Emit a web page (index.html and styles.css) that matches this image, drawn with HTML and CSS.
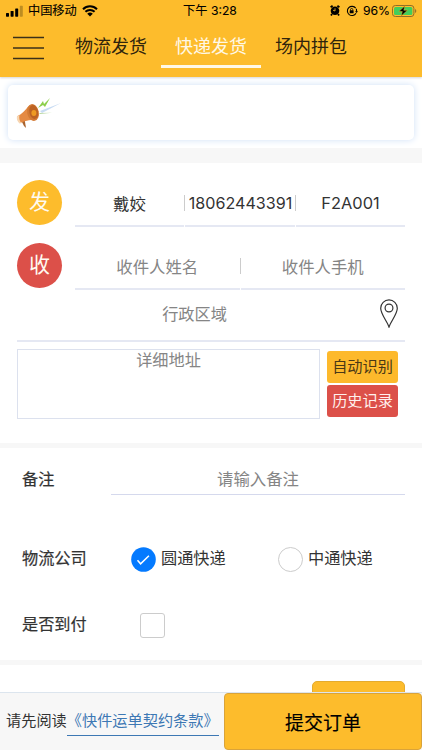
FILE: index.html
```html
<!DOCTYPE html>
<html lang="zh-CN">
<head>
<meta charset="utf-8">
<title>快递发货</title>
<link rel="stylesheet" href="styles.css">
</head>
<body>
<header class="header">
  <div class="status">
    <div class="carrier">
      <svg width="18" height="12" viewBox="0 0 18 12"><rect y="8" width="3" height="3.7" rx=".6"/><rect x="4.6" y="6" width="3" height="5.7" rx=".6"/><rect x="9.2" y="3.4" width="3" height="8.3" rx=".6"/><rect x="13.8" y=".8" width="3" height="10.9" rx=".6" opacity=".25"/></svg>
      <span class="carrier-name">中国移动</span>
      <svg width="16" height="12" viewBox="0 0 16 12"><path d="M1 4.2a10 10 0 0 1 14 0M3.4 6.8a6.6 6.6 0 0 1 9.2 0" fill="none" stroke="#000" stroke-width="2"/><path d="M5.2 8.8a4 4 0 0 1 5.6 0L8 11.6z"/></svg>
    </div>
    <div class="time">下午 3:28</div>
    <div class="indicators">
      <svg width="10" height="11" viewBox="0 0 10 11"><circle cx="5" cy="5.7" r="4.3"/><path d="M.6 2.3 2.6.8M9.4 2.3 7.4.8M2 9l-1 1.4M8 9l1 1.4" stroke="#000" stroke-width="1.8"/><path d="M5 3.3V6l-2-.8" fill="none" stroke="#fdbc2c" stroke-width=".8"/></svg>
      <svg class="lock" width="12" height="12" viewBox="0 0 12 12"><path d="M9.7 3.2A4.6 4.6 0 1 0 10 8.2M10.4 3.8l.2 3" fill="none" stroke="#000" stroke-width="1.1"/><path d="M9 6.2h3L10.5 8z"/><rect x="3.7" y="5.3" width="3.9" height="3" rx=".4"/><path d="M4.5 5.5V4.6a1.15 1.15 0 0 1 2.3 0v.9" fill="none" stroke="#000" stroke-width=".8"/></svg>
      <span class="percent">96%</span>
      <svg width="25" height="12" viewBox="0 0 25 12"><rect x=".5" y=".5" width="21.4" height="11" rx="2.8" fill="none" stroke="#8e6d27"/><rect x="2" y="2" width="18.4" height="8" rx="1.5" fill="#42cd5b"/><path d="M23 4v4q1.3-.7 1.3-2T23 4" fill="#9b752a"/><path d="M13 .8 6.8 6.6h3.5L9 11.2l6.5-6h-3.7z" stroke="#fdbc2c" stroke-width=".5"/></svg>
    </div>
  </div>
  <nav class="nav">
    <svg class="menu" width="32" height="24" viewBox="0 0 32 24"><path d="M0 1.5h31M0 12h31M0 22.5h31" stroke="#3c3018" stroke-width="1.6"/></svg>
    <a class="tab">物流发货</a>
    <a class="tab active">快递发货</a>
    <a class="tab">场内拼包</a>
  </nav>
</header>
<main class="content">
  <section class="notice-wrap">
    <div class="notice">
      <svg width="46" height="34" viewBox="0 0 46 34">
        <path d="m22 12 5-7 1 3 6-6-5 9-2-2z" fill="#8dcf4b"/>
        <path d="m24 15 21-8-19 10z" fill="#c9dcf3"/><path d="m23 17 13-.2L24 18z" fill="#bad8a2"/>
        <path d="m5 24 3.500-1L10 32l-2-2z" fill="#a9632e"/>
        <path d="M1.500 20c4.500-2 8-6 11-10l9 13c-6 1-11 1-17 4-3-2-3.500-4-3-7" fill="#e58a43"/>
        <path d="M.9 20.500 3.500 19c-.8 3 .1 6 2 8.300l-2 .2c-2-1.700-3-4.500-2.600-7" fill="#f7d6b2"/>
        <ellipse cx="17" cy="16.500" rx="5.800" ry="8.500" transform="rotate(-12 17 16.500)" fill="#d37a35"/>
        <ellipse cx="17.700" cy="16" rx="4.300" ry="7" transform="rotate(-12 17.700 16)" fill="#bd6324"/>
        <ellipse cx="17.900" cy="17" rx="2.500" ry="3" fill="#ee9a23"/>
      </svg>
    </div>
  </section>
  <section class="address">
    <div class="party">
      <span class="badge">发</span>
      <div class="fields">
        <div class="field filled">戴姣</div>
        <div class="field filled phone">18062443391</div>
        <div class="field filled">F2A001</div>
      </div>
    </div>
    <div class="party">
      <span class="badge receive">收</span>
      <div class="fields">
        <div class="field">收件人姓名</div>
        <div class="field">收件人手机</div>
      </div>
    </div>
    <div class="region">
      <span class="region-name">行政区域</span>
      <svg width="18" height="29" viewBox="0 0 18 29" fill="none" stroke="#333" stroke-width="1.2"><path d="M9 28C7.300 22.500.7 15 .7 9.200a8.300 8.300 0 0 1 16.600 0C17.300 15 10.700 22.500 9 28z"/><circle cx="9" cy="9" r="3.900"/></svg>
    </div>
    <div class="detail">
      <div class="detail-box">详细地址</div>
      <div class="actions">
        <button class="small">自动识别</button>
        <button class="small history">历史记录</button>
      </div>
    </div>
  </section>
  <section class="options">
    <div class="row remark">
      <span class="label">备注</span>
      <div class="remark-input">请输入备注</div>
    </div>
    <div class="row company">
      <span class="label">物流公司</span>
      <div class="choice"><svg width="25" height="25" viewBox="0 0 25 25"><circle cx="12.500" cy="12.500" r="12.300" fill="#047aff"/><path d="m6.500 13.300 3.100 3.500 8.300-8" fill="none" stroke="#fff" stroke-width="1.500"/></svg>圆通快递</div>
      <div class="choice"><span class="radio"></span>中通快递</div>
    </div>
    <div class="row collect">
      <span class="label">是否到付</span>
      <span class="checkbox"></span>
    </div>
  </section>
  <section class="extra"><span class="extra-button"></span></section>
</main>
<footer class="footer">
  <div class="terms"><span>请先阅读</span><a class="link">《快件运单契约条款》</a></div>
  <button class="submit">提交订单</button>
</footer>
</body>
</html>
```
FILE: styles.css
```css
* { box-sizing: border-box; }
body { margin: 0; width: 422px; height: 750px; overflow: hidden; display: flex; flex-direction: column; background: #f7f7f7; color: #333; font-family: Inter, "Noto Sans CJK SC", sans-serif; font-size: 16.2px; }
svg { display: block; flex: none; }
button { border: 0; margin: 0; padding: 0; font-family: inherit; color: inherit; }
.header { height: 77px; flex: none; background: #fdbc2c; box-shadow: 0 1px 2px #9996; position: relative; }
.status { height: 21px; display: grid; grid-template-columns: 1fr auto 1fr; align-items: center; padding: 0 5px 0 6px; color: #000; font-size: 12.2px; line-height: 20px; }
.carrier { display: flex; align-items: center; }
.carrier svg:first-child { margin-top: 1px; }
.carrier-name { margin: 0 5px 0 4px; -webkit-text-stroke: .1px; }
.time { font-size: 12.2px; margin-right: 3px; -webkit-text-stroke: .1px; }
.indicators { display: flex; align-items: center; justify-content: flex-end; }
.lock { margin: 0 5px 0 6px; }
.percent { margin-right: 2px; font-size: 12.2px; -webkit-text-stroke: .1px; }
.nav { height: 48px; display: flex; align-items: flex-start; padding-left: 13px; color: #30240c; font-size: 18px; }
.menu { margin: 15px 16px 0 0; }
.tab { width: 100px; height: 47px; text-align: center; line-height: 52px; border-bottom: 3px solid transparent; }
.active { color: #fff8e6; border-color: #fff8e6; }
.content { flex: 1; min-height: 0; overflow: hidden; }
.notice-wrap { background: #fff; height: 71px; padding: 8px; }
.notice { height: 55px; background: #fff; border-radius: 5px; box-shadow: 0 0 7px #cfe0f7; padding: 11px 0 0 8px; }
.address { margin-top: 15px; height: 280px; background: #fff; padding: 17px 17px 0 17px; }
.party { display: flex; gap: 13px; height: 63px; }
.badge { width: 45px; height: 45px; border-radius: 50%; background: #fdbc2c; color: #fffaf0; font-size: 21px; line-height: 44px; text-align: center; }
.receive { background: #dc5049; }
.fields { flex: 1; height: 47px; display: flex; gap: 1px; }
.field { flex: 1 1 0; min-width: 0; display: flex; align-items: center; justify-content: center; border-bottom: 2px solid #e5e8f3; color: #858585; position: relative; font-size: 16.4px; }
.field + .field::before { content: ""; position: absolute; left: -1px; top: 15px; height: 16px; width: 1px; background: #ccc; }
.filled { color: #333; }
.phone { white-space: nowrap; font-size: 16.1px; padding-left: 1px; }
.region { height: 43px; margin-top: -7px; border-bottom: 2px solid #e5e8f3; display: flex; color: #858585; line-height: 23px; padding-right: 7px; }
.region-name { flex: 1; text-align: center; padding: 4px 8px 0 0; }
.detail { display: flex; gap: 7px; margin-top: 7px; }
.detail-box { width: 303px; height: 70px; border: 1px solid #dce1ee; color: #858585; text-align: center; line-height: 21px; }
.actions { display: flex; flex-direction: column; gap: 2px; padding-top: 2px; }
.small { width: 71px; height: 32px; border-radius: 3px; background: #fdb92c; color: #493816; font-size: 15.2px; line-height: 30px; }
.history { background: #dc5049; color: #fff0ed; }
.options { margin-top: 5px; height: 212px; background: #fff; padding: 0 17px 0 22px; }
.row { display: flex; }
.label { flex: none; -webkit-text-stroke: .2px; }
.remark { line-height: 32px; padding-top: 15px; }
.remark-input { margin-left: auto; width: 294px; height: 32px; border-bottom: 1px solid #d5d9ed; text-align: center; color: #858585; font-size: 16.4px; }
.company { height: 25px; margin-top: 52px; line-height: 22px; }
.company .label { width: 109px; }
.choice { display: flex; width: 147px; gap: 5px; flex: none; }
.radio { width: 25px; height: 25px; border: 1px solid #ccc; border-radius: 50%; }
.collect { margin-top: 41px; line-height: 22px; }
.collect .label { width: 118px; }
.checkbox { width: 25px; height: 25px; border: 1px solid #ccc; border-radius: 3px; }
.extra { margin-top: 5px; height: 28px; background: #fff; display: flex; justify-content: flex-end; padding: 16px 17px 0 0; }
.extra-button { width: 93px; height: 40px; border: 1px solid #e4ab2e; border-radius: 5px; background: #fdbc2c; }
.footer { position: relative; height: 58px; flex: none; display: flex; border-top: 1px solid #dce5ee; background: #f7f7f7; }
.terms { width: 224px; display: flex; padding: 16px 0 0 6px; font-size: 15.2px; line-height: 24px; white-space: nowrap; }
.link { height: 27px; color: #3d78b4; border-bottom: 1px solid #3d78b4; }
.submit { flex: 1; background: #fdbc2c; border: 1px solid #d9a33a; border-radius: 4px; font-size: 19px; color: #000; -webkit-text-stroke: .15px; }
```
